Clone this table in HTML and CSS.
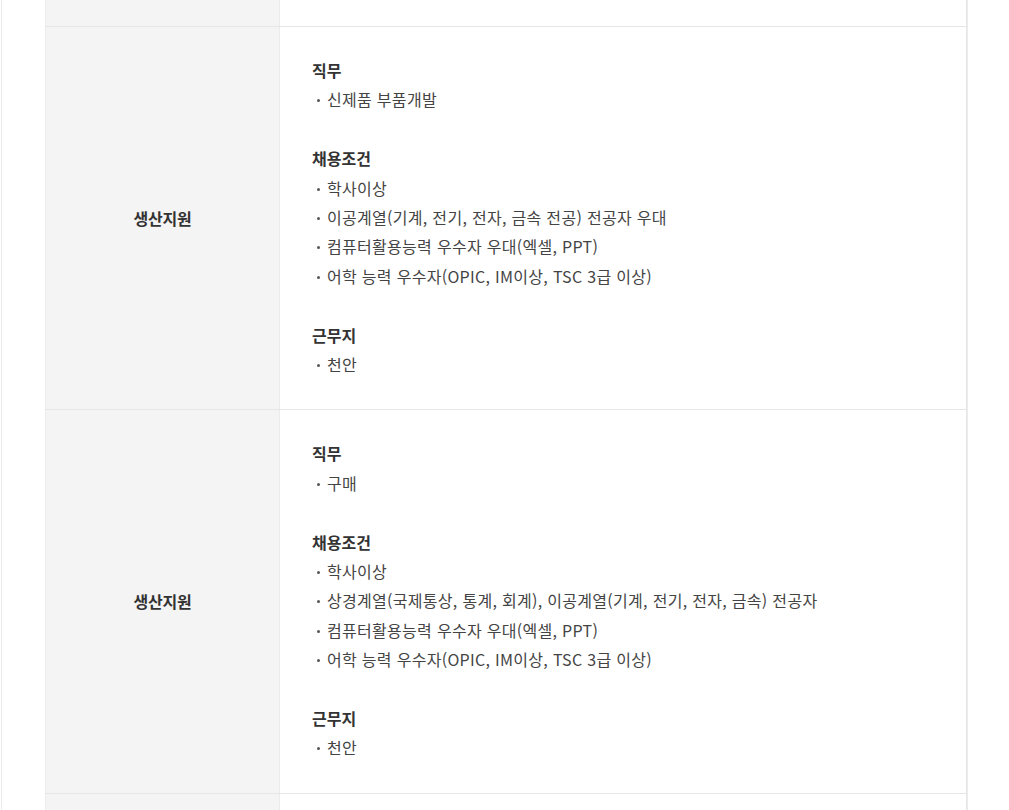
FILE: index.html
```html
<!DOCTYPE html>
<html lang="ko">
<head>
<meta charset="utf-8">
<link rel="stylesheet" href="styles.css">
</head>
<body>
<div class="wrap">
  <table class="jobs">
    <colgroup><col class="c-th"><col></colgroup>
    <tr class="row-partial"><th></th><td></td></tr>
    <tr>
      <th>생산지원</th>
      <td>
        <dl>
          <dt>직무</dt>
          <dd>신제품 부품개발</dd>
        </dl>
        <dl>
          <dt>채용조건</dt>
          <dd>학사이상</dd>
          <dd>이공계열(기계, 전기, 전자, 금속 전공) 전공자 우대</dd>
          <dd>컴퓨터활용능력 우수자 우대(엑셀, PPT)</dd>
          <dd>어학 능력 우수자(OPIC, IM이상, TSC 3급 이상)</dd>
        </dl>
        <dl>
          <dt>근무지</dt>
          <dd>천안</dd>
        </dl>
      </td>
    </tr>
    <tr>
      <th>생산지원</th>
      <td>
        <dl>
          <dt>직무</dt>
          <dd>구매</dd>
        </dl>
        <dl>
          <dt>채용조건</dt>
          <dd>학사이상</dd>
          <dd>상경계열(국제통상, 통계, 회계), 이공계열(기계, 전기, 전자, 금속) 전공자</dd>
          <dd>컴퓨터활용능력 우수자 우대(엑셀, PPT)</dd>
          <dd>어학 능력 우수자(OPIC, IM이상, TSC 3급 이상)</dd>
        </dl>
        <dl>
          <dt>근무지</dt>
          <dd>천안</dd>
        </dl>
      </td>
    </tr>
    <tr class="row-partial"><th></th><td></td></tr>
  </table>
</div>
</body>
</html>
```
FILE: styles.css
```css
html, body {
  margin: 0;
  padding: 0;
  background: #fff;
  overflow: hidden;
}
body {
  font-family: "Noto Sans CJK KR", "Noto Sans", sans-serif;
  color: #444;
}
.wrap {
  margin-left: 1px;
  width: 922px;
  padding-left: 43px;
  border-left: 1px solid #ececec;
  border-right: 1px solid #ececec;
  height: 810px;
}
.jobs {
  width: 922px;
  border-collapse: collapse;
  table-layout: fixed;
}
.c-th { width: 234px; }
.jobs th,
.jobs td {
  border-top: 1px solid #e6e6e6;
  border-bottom: 1px solid #e6e6e6;
  vertical-align: middle;
}
.jobs th {
  background: #f4f4f4;
  border-left: 1px solid #ededed;
  border-right: 1px solid #ebebeb;
  font-size: 16px;
  font-weight: 700;
  color: #333;
  text-align: center;
  letter-spacing: -0.2px;
  padding-bottom: 2px;
}
.jobs td {
  border-right: 1px solid #e6e6e6;
  padding: 29px 32px 30px 32px;
  text-align: left;
}
.row-partial th,
.row-partial td {
  height: 26px;
  padding: 0;
  border-top: none;
}
.jobs tr:last-child th,
.jobs tr:last-child td {
  border-bottom: none;
}
dl {
  margin: 0 0 29.4px 0;
}
dl:last-child {
  margin-bottom: 0;
}
dt {
  font-size: 16px;
  font-weight: 700;
  color: #333;
  line-height: 29.4px;
  letter-spacing: 0;
}
dd {
  margin: 0;
  font-size: 16px;
  line-height: 29.4px;
  color: #444;
  letter-spacing: 0.3px;
  padding-left: 15px;
  position: relative;
}
dd::before {
  content: "";
  position: absolute;
  left: 5px;
  top: 14px;
  width: 3px;
  height: 3px;
  border-radius: 50%;
  background: #555;
}
```
